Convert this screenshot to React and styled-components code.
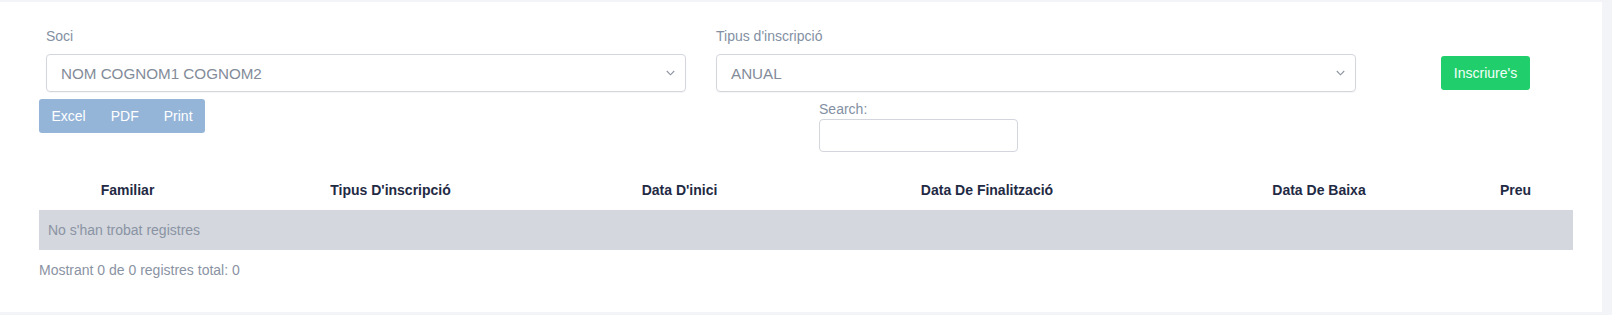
import React from "react";
import styled, { createGlobalStyle } from "styled-components";

const GlobalStyle = createGlobalStyle`
  html, body {
    margin: 0;
    padding: 0;
    background: #f2f4f8;
    font-family: "Liberation Sans", Arial, sans-serif;
  }
`;

const Card = styled.div`
  margin-top: 2px;
  width: 1602px;
  height: 310px;
  box-sizing: border-box;
  background: #fff;
  padding: 24px 0 0 39px;
`;

const FormRow = styled.div`
  display: flex;
  align-items: flex-end;
  padding-left: 7px;
`;

const Field = styled.div`
  display: flex;
  flex-direction: column;
  width: 640px;
  margin-right: ${(p) => p.gap || 0}px;
`;

const Label = styled.label`
  font-size: 14px;
  color: #8390a3;
  line-height: 20px;
  margin-bottom: ${(p) => p.mb ?? 8}px;
`;

const SelectBox = styled.div`
  height: 38px;
  box-sizing: border-box;
  border: 1px solid #d3d6dc;
  border-radius: 4px;
  display: flex;
  align-items: center;
  justify-content: space-between;
  padding: 0 10px 0 14px;
  font-size: 15.2px;
  color: #838b99;
  box-shadow: 0 1px 1px rgba(0, 0, 0, 0.04);
`;

const Chevron = () => (
  <svg width="9" height="6" viewBox="0 0 9 6">
    <path d="M0.8 1 L4.5 4.8 L8.2 1" fill="none" stroke="#8c93a0" strokeWidth="1.1" />
  </svg>
);

const GreenButton = styled.button`
  margin-left: 85px;
  margin-bottom: 2px;
  width: 89px;
  height: 34px;
  border: none;
  border-radius: 3px;
  background: #20cf6b;
  color: #f4fff8;
  font-family: inherit;
  font-size: 14px;
`;

const ToolRow = styled.div`
  display: flex;
  align-items: flex-start;
  margin-top: 7px;
`;

const ButtonGroup = styled.div`
  display: flex;
  background: #94b4d8;
  border-radius: 3px;
  height: 34px;
`;

const GroupButton = styled.span`
  color: #fff;
  font-size: 14px;
  padding: 0 12.5px;
  line-height: 34px;
`;

const SearchBox = styled.div`
  display: flex;
  flex-direction: column;
  margin-left: 614px;
`;

const SearchInput = styled.div`
  width: 199px;
  height: 33px;
  box-sizing: border-box;
  border: 1px solid #d3d6dc;
  border-radius: 4px;
`;

const Table = styled.div`
  width: 1534px;
  margin-top: 18px;
`;

const HeadRow = styled.div`
  display: grid;
  grid-template-columns: 177px 349px 229px 386px 278px 115px;
  height: 40px;
  align-items: center;
`;

const Th = styled.div`
  text-align: center;
  font-size: 14px;
  font-weight: bold;
  color: #1f2a44;
`;

const EmptyRow = styled.div`
  height: 40px;
  background: #d4d7de;
  display: flex;
  align-items: center;
  padding-left: 9px;
  font-size: 14px;
  color: #8a93a3;
`;

const Footer = styled.div`
  margin-top: 12px;
  font-size: 14px;
  line-height: 16px;
  color: #8a93a3;
`;

const columns = [
  "Familiar",
  "Tipus D'inscripció",
  "Data D'inici",
  "Data De Finalització",
  "Data De Baixa",
  "Preu",
];

export default function App() {
  return (
    <>
      <GlobalStyle />
      <Card>
        <FormRow>
          <Field gap={30}>
            <Label>Soci</Label>
            <SelectBox>
              NOM COGNOM1 COGNOM2
              <Chevron />
            </SelectBox>
          </Field>
          <Field>
            <Label>Tipus d'inscripció</Label>
            <SelectBox>
              ANUAL
              <Chevron />
            </SelectBox>
          </Field>
          <GreenButton>Inscriure's</GreenButton>
        </FormRow>
        <ToolRow>
          <ButtonGroup>
            <GroupButton>Excel</GroupButton>
            <GroupButton>PDF</GroupButton>
            <GroupButton>Print</GroupButton>
          </ButtonGroup>
          <SearchBox>
            <Label mb={0}>Search:</Label>
            <SearchInput />
          </SearchBox>
        </ToolRow>
        <Table>
          <HeadRow>
            {columns.map((c) => (
              <Th key={c}>{c}</Th>
            ))}
          </HeadRow>
          <EmptyRow>No s'han trobat registres</EmptyRow>
        </Table>
        <Footer>Mostrant 0 de 0 registres total: 0</Footer>
      </Card>
    </>
  );
}
